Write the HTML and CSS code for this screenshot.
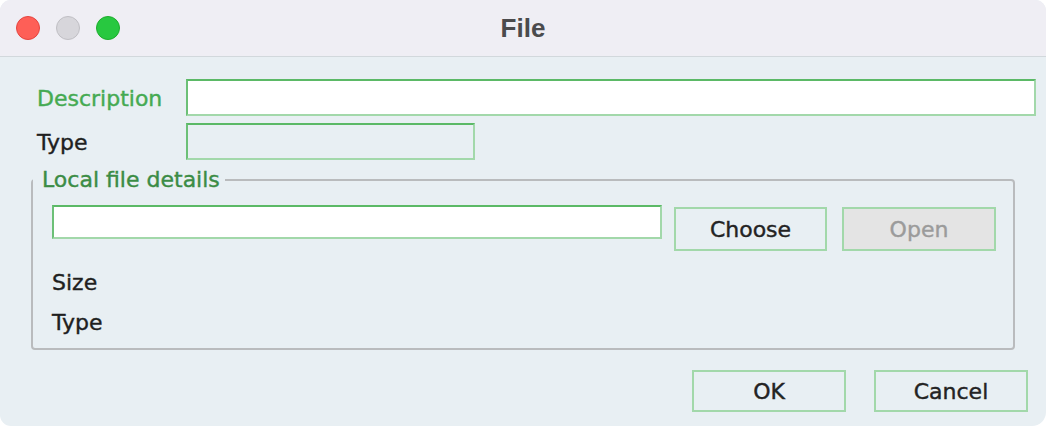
FILE: index.html
```html
<!DOCTYPE html>
<html lang="en">
<head>
<meta charset="utf-8">
<title>File</title>
<link rel="stylesheet" href="styles.css">
</head>
<body>
<div class="window">
  <div class="titlebar">
    <div class="lights">
      <span class="light red"></span>
      <span class="light gray"></span>
      <span class="light green"></span>
    </div>
    <div class="title">File</div>
    <div class="spacer"></div>
  </div>
  <div class="content">
    <div class="form-grid">
      <label class="label label-active">Description</label>
      <div class="field field-white field-wide"></div>
      <label class="label">Type</label>
      <div class="field field-plain field-short"></div>
    </div>
    <fieldset class="group">
      <legend class="group-legend">Local file details</legend>
      <div class="file-row">
        <div class="field field-white field-file"></div>
        <button class="btn btn-choose">Choose</button>
        <button class="btn btn-open" disabled>Open</button>
      </div>
      <div class="info info-first">Size</div>
      <div class="info">Type</div>
    </fieldset>
    <div class="actions">
      <button class="btn btn-action">OK</button>
      <button class="btn btn-action">Cancel</button>
    </div>
  </div>
</div>
</body>
</html>
```

FILE: styles.css
```css
* { box-sizing: border-box; }
html, body {
  margin: 0;
  padding: 0;
  background: #ffffff;
}
body {
  width: 1046px;
  height: 426px;
  overflow: hidden;
  font-family: "DejaVu Sans", "Verdana", sans-serif;
}
.window {
  width: 1046px;
  height: 426px;
  background: #e8eff3;
  border-radius: 11px 11px 14px 11px;
  overflow: hidden;
  display: flex;
  flex-direction: column;
}
.titlebar {
  height: 57px;
  flex: none;
  background: #efeef4;
  border-bottom: 1px solid #d2d8dc;
  display: grid;
  grid-template-columns: 1fr auto 1fr;
  align-items: center;
}
.lights {
  display: flex;
  gap: 16px;
  padding-left: 16px;
}
.light {
  width: 24px;
  height: 24px;
  border-radius: 50%;
  display: block;
}
.light.red { background: #fe5f57; border: 1px solid #e5443f; }
.light.gray { background: #d7d6db; border: 1px solid #c0bfc4; }
.light.green { background: #28c840; border: 1px solid #1dad2c; }
.title {
  font-family: "Liberation Sans", Arial, sans-serif;
  font-weight: 700;
  font-size: 26px;
  color: #4b4b4d;
  line-height: 56px;
}
.content {
  padding: 22px 10px 0 31px;
  display: flex;
  flex-direction: column;
}
.form-grid {
  display: grid;
  grid-template-columns: 149px 1fr;
  grid-auto-rows: 37px;
  row-gap: 7px;
  align-items: center;
  margin-left: 6px;
}
.label {
  font-size: 22px;
  color: #1f1f1f;
  line-height: 26px;
  padding-top: 2px;
  -webkit-text-stroke: 0.4px currentColor;
}
.label-active { color: #45aa52; }
.field {
  height: 37px;
  border: 2px solid #a2d8aa;
  border-top-color: #5bb966;
  border-left-color: #6cc077;
}
.field-white { background: #ffffff; }
.field-plain { background: transparent; }
.field-wide { width: 850px; }
.field-short { width: 289px; }
.group {
  margin: 7px 21px 0 0;
  padding: 12px 10px 5px 19px;
  border: 2px solid #b9bbbd;
  border-radius: 4px;
  min-width: 0;
}
.group-legend {
  padding: 0 5px 0 9px;
  margin-left: -19px;
  font-size: 22px;
  line-height: 26px;
  color: #3b8c45;
  -webkit-text-stroke: 0.4px currentColor;
}
.file-row {
  display: flex;
  align-items: flex-start;
}
.field-file {
  flex: none;
  width: 610px;
  height: 34px;
}
.btn {
  flex: none;
  font-family: "DejaVu Sans", "Verdana", sans-serif;
  font-size: 22px;
  color: #232323;
  background: transparent;
  border: 2px solid #a2d8aa;
  padding: 2px 0 0 0;
  margin: 0;
  line-height: 26px;
  -webkit-text-stroke: 0.4px currentColor;
}
.btn-choose {
  width: 153px;
  height: 44px;
  margin-top: 2px;
  margin-left: 12px;
}
.btn-open {
  width: 154px;
  height: 44px;
  margin-top: 2px;
  margin-left: 15px;
  background: #e4e4e4;
  color: #9b9b9b;
}
.info {
  font-size: 22px;
  color: #1f1f1f;
  line-height: 40px;
  -webkit-text-stroke: 0.4px currentColor;
}
.info-first { margin-top: 12px; }
.actions {
  display: flex;
  justify-content: flex-end;
  gap: 28px;
  margin-top: 20px;
  margin-right: 8px;
}
.btn-action {
  width: 154px;
  height: 42px;
}
```
